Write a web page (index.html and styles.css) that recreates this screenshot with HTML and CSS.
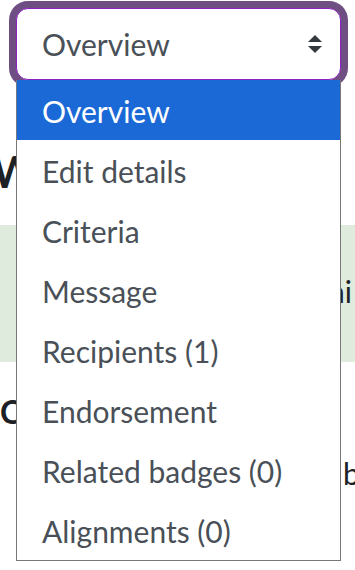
FILE: index.html
```html
<!DOCTYPE html>
<html lang="en">

<head>
    <meta charset="UTF-8">
    <meta name="viewport" content="width=device-width, initial-scale=1.0">
    <title>Badge overview</title>
    <link rel="stylesheet" href="styles.css">
</head>

<body>
    <div class="page">
        <div class="select">
            <span class="select-value">Overview</span>
            <svg class="caret" width="18" height="22" viewBox="0 0 18 22">
                <path d="M9 2 L16 9 L2 9 Z" fill="#343a40" />
                <path d="M2 13 L16 13 L9 20 Z" fill="#343a40" />
            </svg>
        </div>

        <h2 class="badge-title">Wiki</h2>

        <div class="alert">
            <div class="clip">
                <p>This badge can be awarded by admini</p>
            </div>
        </div>

        <h3 class="section-title">Criteria</h3>
        <div class="clip section-row">
            <p class="section-text">Users are awarded this badge by</p>
        </div>

        <ul class="menu">
            <li class="act">Overview</li>
            <li>Edit details</li>
            <li>Criteria</li>
            <li>Message</li>
            <li>Recipients (1)</li>
            <li>Endorsement</li>
            <li>Related badges (0)</li>
            <li>Alignments (0)</li>
        </ul>
    </div>
</body>

</html>
```

FILE: styles.css
```css
* {
    margin: 0;
    padding: 0;
    box-sizing: border-box;
}

ul {
    list-style: none;
}

body {
    overflow: hidden;
    font-family: Lato, "Liberation Sans", sans-serif;
    color: #1d2125;
    background-color: #fff;
}

.page {
    position: relative;
    height: 570px;
    overflow: hidden;
}

.select {
    display: flex;
    justify-content: space-between;
    align-items: center;
    height: 72px;
    margin: 8px 14px 0 16px;
    padding: 0 25px;
    font-size: 30px;
    color: #495057;
    background-color: #fff;
    border: 1px solid #8e22c0;
    border-radius: 12px;
    box-shadow: 0 0 0 7px #6e4e83;
}

.caret {
    margin-right: -9px;
}

.badge-title {
    margin: 66px 0 0 -8px;
    font-size: 43px;
    font-weight: 700;
    line-height: 1.2;
}

.clip {
    display: flex;
    justify-content: flex-end;
    margin-left: 24px;
    overflow: hidden;
}

.clip p {
    flex-shrink: 0;
    font-size: 30px;
    line-height: 45px;
    white-space: nowrap;
}

.alert {
    height: 137px;
    margin-top: 27px;
    padding: 44px 3px 0 0;
    background-color: #dfebdc;
}

.section-title {
    margin-top: 31px;
    font-size: 32px;
    font-weight: 700;
    line-height: 1.2;
}

.section-row {
    margin-top: 20px;
    margin-right: -20px;
}

.menu {
    position: absolute;
    top: 80px;
    left: 16px;
    width: 325px;
    background-color: #fff;
    border: 1px solid #777;
    border-top: none;
}

.menu li {
    height: 60px;
    padding-top: 2px;
    padding-left: 25px;
    font-size: 30px;
    line-height: 58px;
    color: #495057;
    white-space: nowrap;
}

.menu li.act {
    color: #fff;
    background-color: #1a69d6;
}
```
